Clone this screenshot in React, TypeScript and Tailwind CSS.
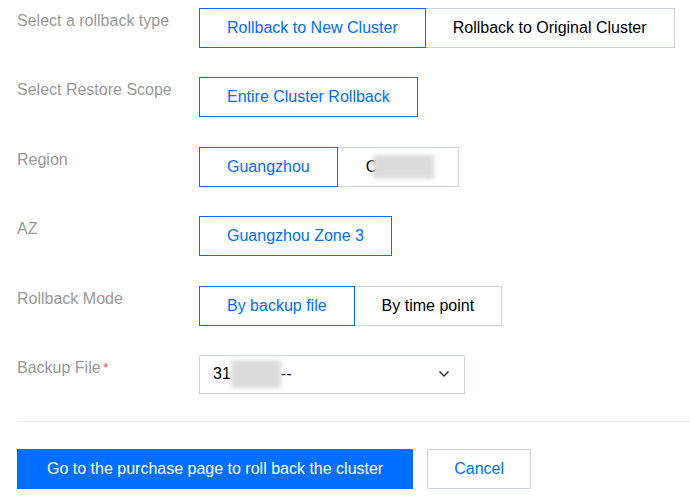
import { ReactNode } from 'react';

const font = { fontFamily: '"Liberation Sans", Arial, sans-serif' };

interface OptionProps {
  children: ReactNode;
  active?: boolean;
  first?: boolean;
}

const Option = ({ children, active, first }: OptionProps) => (
  <button
    className={
      active
        ? 'relative z-10 h-[40px] px-[27px] border border-[#006eff] text-[#006eff] text-[16px] bg-white whitespace-nowrap'
        : 'relative h-[40px] px-[27px] border border-[#cfd5de] text-[#000] text-[16px] bg-white whitespace-nowrap' +
          (first ? '' : ' -ml-px')
    }
  >
    {children}
  </button>
);

const Blur = ({ className }: { className: string }) => (
  <span className={'inline-block bg-[#dcdcdc] blur-[2px] ' + className} />
);

const Row = ({ label, required, children }: { label: string; required?: boolean; children: ReactNode }) => (
  <div className="flex items-start">
    <div className="w-[182px] pt-[3px] text-[16px] leading-[20px] text-[#999]">
      {label}
      {required && <span className="ml-[3px] text-[12px] align-top text-[#e54545]">*</span>}
    </div>
    <div className="flex">{children}</div>
  </div>
);

export default function App() {
  return (
    <div className="w-[690px] h-[498px] bg-white overflow-hidden" style={font}>
      <div className="pl-[17px] pt-[8px] flex flex-col gap-[29.4px]">
        <Row label="Select a rollback type">
          <Option active first>Rollback to New Cluster</Option>
          <Option>Rollback to Original Cluster</Option>
        </Row>
        <Row label="Select Restore Scope">
          <Option active first>Entire Cluster Rollback</Option>
        </Row>
        <Row label="Region">
          <Option active first>Guangzhou</Option>
          <button className="relative -ml-px h-[40px] w-[122px] border border-[#cfd5de] bg-white text-[16px] text-black flex items-center pl-[28px]">
            <span>C</span>
            <Blur className="w-[61px] h-[24px] -ml-[4px]" />
          </button>
        </Row>
        <Row label="AZ">
          <Option active first>Guangzhou Zone 3</Option>
        </Row>
        <Row label="Rollback Mode">
          <Option active first>By backup file</Option>
          <Option>By time point</Option>
        </Row>
        <Row label="Backup File" required>
          <div className="h-[39px] w-[266px] border border-[#cfd5de] flex items-center pl-[13px] pr-[14px] text-[16px] text-black">
            <span>31</span>
            <Blur className="w-[50px] h-[28px]" />
            <span>--</span>
            <svg className="ml-auto" width="12" height="8" viewBox="0 0 12 8" fill="none">
              <path d="M1.5 1.5 L6 6 L10.5 1.5" stroke="#333" strokeWidth="1.5" />
            </svg>
          </div>
        </Row>
      </div>

      <div className="ml-[17px] mt-[27px] border-t border-[#e5e5e5]" />

      <div className="pl-[17px] pt-[27px] flex gap-[14px]">
        <button className="h-[40px] px-[30px] bg-[#006eff] text-white text-[16px] whitespace-nowrap">
          Go to the purchase page to roll back the cluster
        </button>
        <button className="h-[40px] px-[26px] border border-[#cfd5de] bg-white text-[#006eff] text-[16px]">
          Cancel
        </button>
      </div>
    </div>
  );
}
